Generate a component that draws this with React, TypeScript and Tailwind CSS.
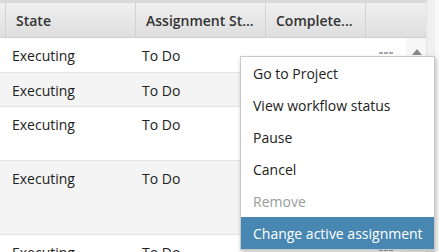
import React from "react";

const rows = [
  { h: "h-[35px]", bg: "bg-white" },
  { h: "h-[34px]", bg: "bg-[#f4f4f4]" },
  { h: "h-[54px]", bg: "bg-white" },
  { h: "h-[74px]", bg: "bg-[#f4f4f4]" },
  { h: "h-[40px]", bg: "bg-white" },
];

const menu = [
  { label: "Go to Project" },
  { label: "View workflow status" },
  { label: "Pause" },
  { label: "Cancel" },
  { label: "Remove", disabled: true },
  { label: "Change active assignment", active: true },
];

function Dots() {
  return (
    <div className="flex gap-[1px] mt-[6px]">
      <span className="w-[4px] h-[2px] bg-[#a3a8b4]" />
      <span className="w-[4px] h-[2px] bg-[#a3a8b4]" />
      <span className="w-[4px] h-[2px] bg-[#a3a8b4]" />
    </div>
  );
}

export default function App() {
  return (
    <div
      className="relative w-[439px] h-[252px] overflow-hidden bg-white flex text-[14px] text-[#222]"
      style={{ fontFamily: '"Open Sans", "Liberation Sans", sans-serif' }}
    >
      <div className="w-[426px] h-[252px] flex flex-col overflow-hidden shrink-0">
        <div className="h-[3px] shrink-0 bg-[#d9d9d9]" />
        <div className="h-[35px] shrink-0 flex bg-gradient-to-b from-[#f0f0f0] to-[#dedede] border-b border-[#cfcfcf] font-semibold text-[#333]">
          <div className="w-[6px] border-r border-[#d2d2d2]" />
          <div className="w-[130px] border-r border-[#d2d2d2] pl-[10px] flex items-center">State</div>
          <div className="w-[130px] border-r border-[#d2d2d2] pl-[10px] flex items-center whitespace-nowrap overflow-hidden">
            Assignment St...
          </div>
          <div className="w-[100px] border-r border-[#d2d2d2] pl-[10px] flex items-center">Complete...</div>
          <div className="flex-1" />
        </div>
        <div className="flex flex-1 min-h-0 overflow-hidden">
          <div className="w-[406px] flex flex-col">
            {rows.map((r, i) => (
              <div key={i} className={`${r.h} ${r.bg} shrink-0 flex border-b border-[#e4e4e4] leading-[20px]`}>
                <div className="w-[136px] pl-[12px] pt-[8px]">Executing</div>
                <div className="w-[130px] pl-[6px] pt-[8px]">To Do</div>
                <div className="w-[100px]" />
                <div className="flex-1 pl-[13px] pt-[8px]">
                  <Dots />
                </div>
              </div>
            ))}
          </div>
          <div className="w-[20px] bg-[#f7f7f7] flex justify-center pt-[11px]">
            <svg width="10" height="6" viewBox="0 0 10 6" className="ml-[2px]">
              <polygon points="5,0 10,6 0,6" fill="#8a8a8a" />
            </svg>
          </div>
        </div>
      </div>
      <div className="w-[9px] shrink-0 bg-[#efefef] border-l border-[#e2e2e2]" />
      <div className="flex-1 bg-[#f8f8f8]" />

      <div className="absolute left-[240px] top-[56px] w-[195px] bg-white border border-[#c9c9c9] shadow-[1px_2px_4px_rgba(0,0,0,0.25)] leading-[20px]">
        {menu.map((m) => (
          <div
            key={m.label}
            className={`h-[32px] flex items-center pl-[12px] pt-[1px] whitespace-nowrap ${
              m.active ? "bg-[#4787b2] text-white" : m.disabled ? "text-[#9a9a9a]" : "text-[#222]"
            }`}
          >
            {m.label}
          </div>
        ))}
      </div>
    </div>
  );
}
